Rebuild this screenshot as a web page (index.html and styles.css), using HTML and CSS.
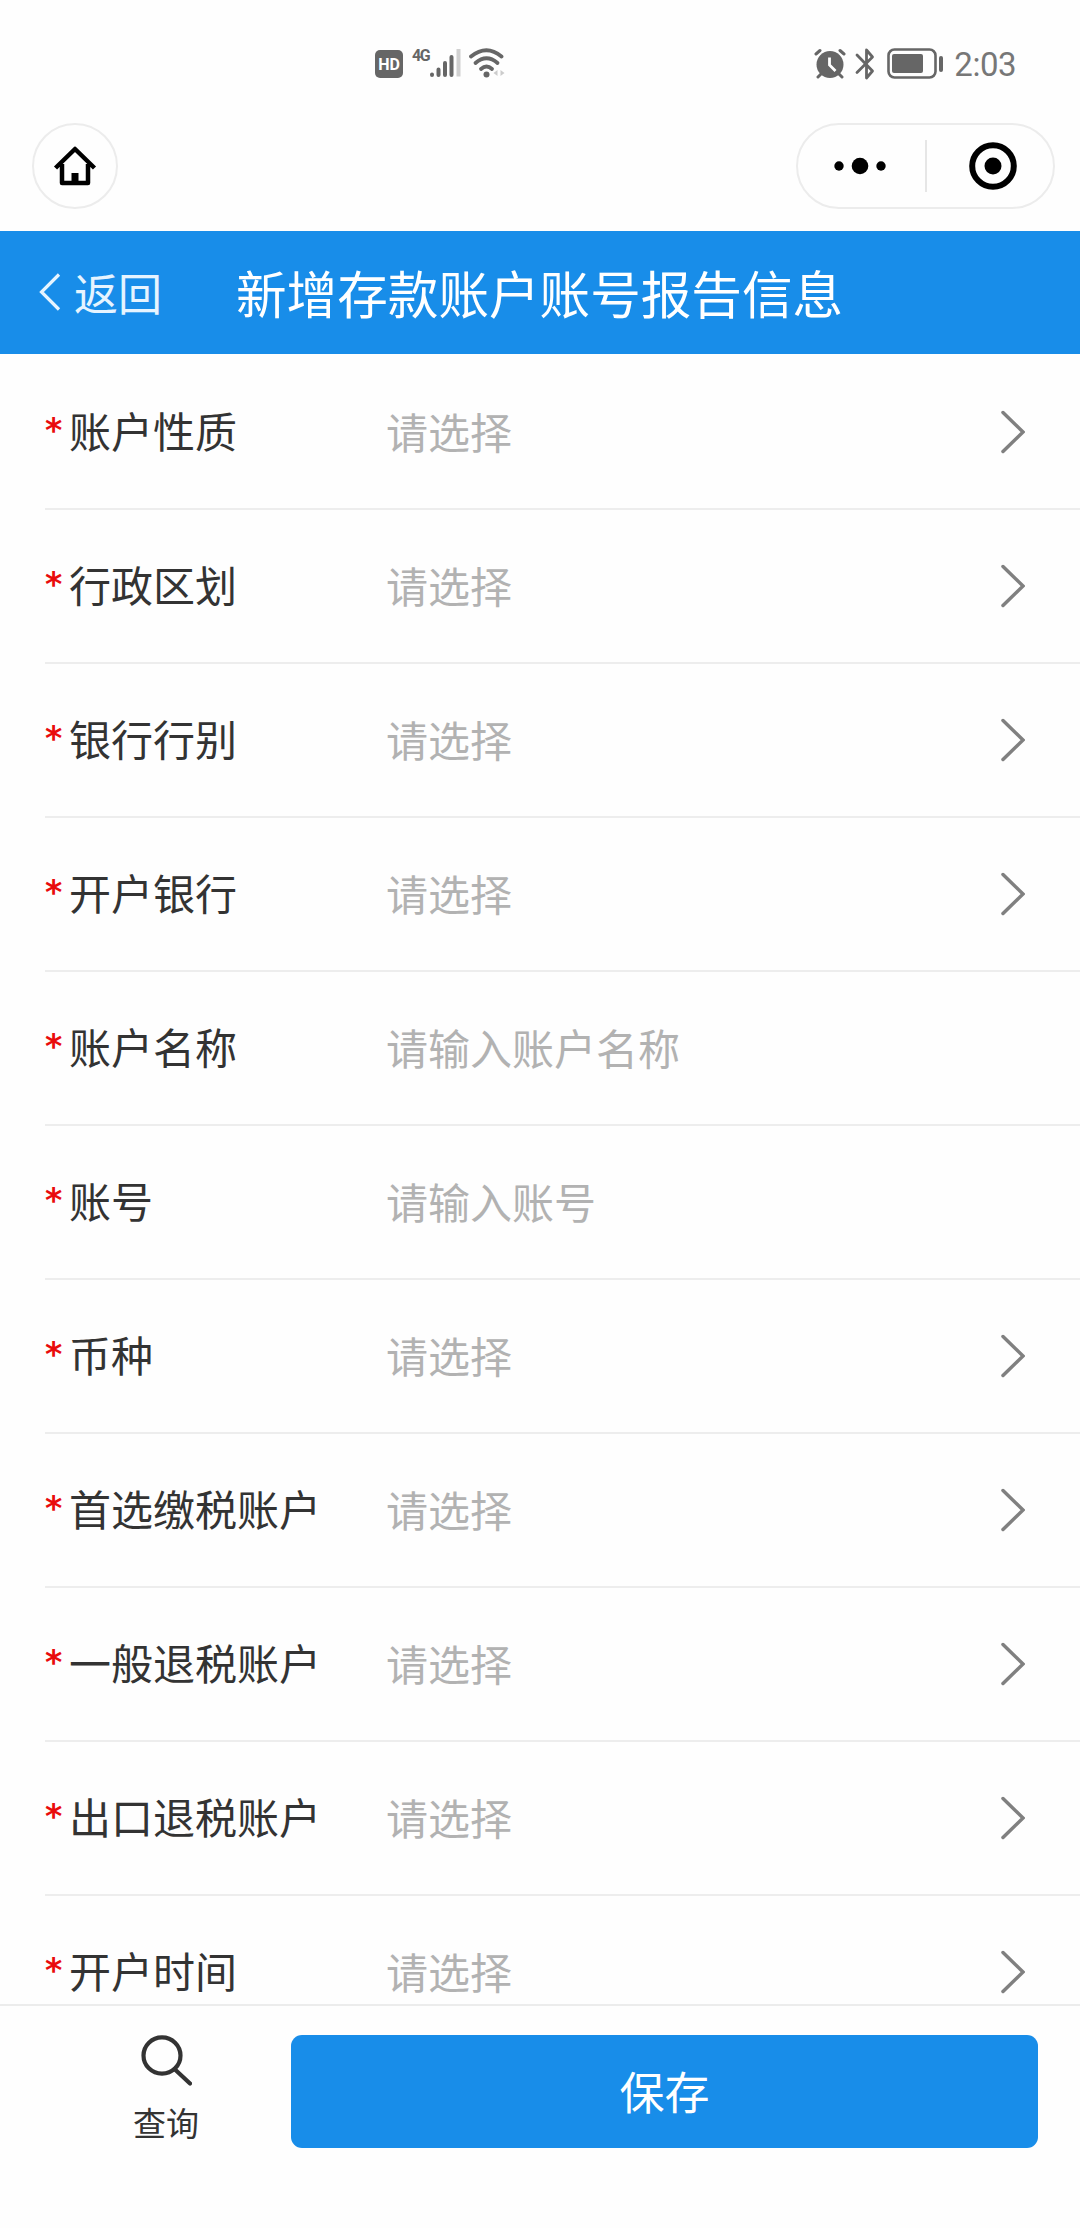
FILE: index.html
```
<!doctype html>
<html lang="zh-CN">
  <head>
    <meta charset="UTF-8" />
    <title>新增存款账户账号报告信息</title>
    <link rel="stylesheet" href="styles.css">
  </head>
  <body>
    <div class="status-bar">
      <div class="status-left">
        <span class="hd">HD</span>
        <span class="network">4G</span>
        <svg class="signal" width="32" height="30" viewBox="0 0 32 30">
          <g fill="none" stroke="#666" stroke-width="4" stroke-linecap="round">
            <path d="M3 26.5V27M9.5 21.500V27M16 15V27M22.500 9V27" />
            <path d="M29.500 1V28.500" stroke="#d0d0d0" stroke-linecap="butt" />
          </g>
        </svg>
        <svg class="wifi" width="36" height="30" viewBox="0 0 36 30">
          <g fill="none" stroke="#666" stroke-width="3.800" stroke-linecap="round">
            <path d="M2 8.500Q17.500 -4 32.500 8.500" />
            <path d="M6.500 15Q17.500 5.500 28.500 15" />
            <path d="M12 21Q17.500 16 23 21" />
          </g>
          <circle cx="17.500" cy="26.500" r="3" fill="#666" />
          <path d="M28.500 22v6l-4-3zM31.500 22v6l4-3z" fill="#ccc" />
        </svg>
      </div>
      <div class="status-right">
        <svg width="32" height="32" viewBox="0 0 32 32">
          <g fill="none" stroke="#666" stroke-width="3" stroke-linecap="round">
            <path d="M2 6L6 2.500M26 2.500L30 6M7 26L4 29M25 26L28 29" />
          </g>
          <circle cx="16" cy="16.500" r="13.500" fill="#666" />
          <path d="M15.500 9.500v7.500l6 6" fill="none" stroke="#fff" stroke-width="2.800" />
        </svg>
        <svg class="bluetooth" width="20" height="34" viewBox="0 0 20 34">
          <path d="M2 8L17.500 24L11.500 31V3L17.500 10L2 25.500" fill="none" stroke="#666" stroke-width="2.800" stroke-linecap="round" stroke-linejoin="round" />
        </svg>
        <svg class="battery" width="58" height="32" viewBox="0 0 58 32">
          <rect x="1.500" y="1.500" width="47" height="28" rx="6" fill="none" stroke="#666" stroke-width="2.600" />
          <rect x="5" y="6" width="31" height="19" rx="2" fill="#666" />
          <rect x="52" y="8" width="4" height="16" rx="2" fill="#666" />
        </svg>
        <span class="clock">2:03</span>
      </div>
    </div>

    <div class="app-bar">
      <div class="home">
        <svg width="44" height="40" viewBox="0 0 44 40">
          <path d="M2.500 22L22 3L41.500 22M9 18V37H35V18" fill="none" stroke="#000" stroke-width="4.500" stroke-linejoin="round" />
          <path d="M18.500 27h7v11h-7z" />
        </svg>
      </div>
      <div class="capsule">
        <svg width="52" height="18" viewBox="0 0 52 18">
          <circle cx="5" cy="9" r="4.700" />
          <circle cx="26" cy="9" r="8.300" />
          <circle cx="47" cy="9" r="4.700" />
        </svg>
        <span class="divider"></span>
        <svg width="48" height="48" viewBox="0 0 48 48">
          <circle cx="24" cy="24" r="20.800" fill="none" stroke="#000" stroke-width="6" />
          <circle cx="24" cy="24" r="8.500" />
        </svg>
      </div>
    </div>

    <div class="header">
      <div class="back">
        <svg width="22" height="38" viewBox="0 0 22 38">
          <path d="M20 1.500L2.500 19L20 36.500" fill="none" stroke="#e6f4ff" stroke-width="3.200" />
        </svg>
        <span>返回</span>
      </div>
      <h1>新增存款账户账号报告信息</h1>
    </div>

    <div class="form">
      <div class="row"><i>*</i><label>账户性质</label><span class="value">请选择</span><svg class="arrow" viewBox="0 0 24 44"><path d="M2 2.500L22 22L2 41.500" /></svg></div>
      <div class="row"><i>*</i><label>行政区划</label><span class="value">请选择</span><svg class="arrow" viewBox="0 0 24 44"><path d="M2 2.500L22 22L2 41.500" /></svg></div>
      <div class="row"><i>*</i><label>银行行别</label><span class="value">请选择</span><svg class="arrow" viewBox="0 0 24 44"><path d="M2 2.500L22 22L2 41.500" /></svg></div>
      <div class="row"><i>*</i><label>开户银行</label><span class="value">请选择</span><svg class="arrow" viewBox="0 0 24 44"><path d="M2 2.500L22 22L2 41.500" /></svg></div>
      <div class="row"><i>*</i><label>账户名称</label><span class="value">请输入账户名称</span></div>
      <div class="row"><i>*</i><label>账号</label><span class="value">请输入账号</span></div>
      <div class="row"><i>*</i><label>币种</label><span class="value">请选择</span><svg class="arrow" viewBox="0 0 24 44"><path d="M2 2.500L22 22L2 41.500" /></svg></div>
      <div class="row"><i>*</i><label>首选缴税账户</label><span class="value">请选择</span><svg class="arrow" viewBox="0 0 24 44"><path d="M2 2.500L22 22L2 41.500" /></svg></div>
      <div class="row"><i>*</i><label>一般退税账户</label><span class="value">请选择</span><svg class="arrow" viewBox="0 0 24 44"><path d="M2 2.500L22 22L2 41.500" /></svg></div>
      <div class="row"><i>*</i><label>出口退税账户</label><span class="value">请选择</span><svg class="arrow" viewBox="0 0 24 44"><path d="M2 2.500L22 22L2 41.500" /></svg></div>
      <div class="row"><i>*</i><label>开户时间</label><span class="value">请选择</span><svg class="arrow" viewBox="0 0 24 44"><path d="M2 2.500L22 22L2 41.500" /></svg></div>
    </div>

    <div class="footer">
      <div class="query">
        <svg width="52" height="54" viewBox="0 0 52 54">
          <g fill="none" stroke="#333" stroke-width="4.200" stroke-linecap="round">
            <ellipse cx="22" cy="20.500" rx="18.500" ry="18.200" />
            <path d="M35 34.500L50 48.500" />
          </g>
        </svg>
        <span>查询</span>
      </div>
      <button class="save">保存</button>
    </div>
  </body>
</html>
```
FILE: styles.css
```
* {
  box-sizing: border-box;
}

body {
  margin: 0;
  width: 1080px;
  height: 2228px;
  display: flex;
  flex-direction: column;
  overflow: hidden;
  background: #fefefe;
  color: #333;
  font-family: "Noto Sans CJK SC", sans-serif;
}

svg {
  display: block;
  flex: none;
}

/* phone status bar */
.status-bar {
  height: 123px;
  padding: 0 64px 0 375px;
  display: flex;
  justify-content: space-between;
  align-items: flex-start;
  color: #666;
}

.status-left {
  display: flex;
  margin-top: 48px;
}

.hd {
  width: 28px;
  height: 28px;
  margin-top: 2px;
  border-radius: 5px;
  background: #666;
  color: #fff;
  font: bold 16px/29px Roboto, sans-serif;
  text-align: center;
}

.network {
  margin-left: 9px;
  width: 17px;
  font: bold 16px/16px Roboto, sans-serif;
  letter-spacing: -1.500px;
}

.wifi {
  margin-left: 8px;
}

.status-right {
  display: flex;
  align-items: center;
  margin-top: 46px;
  height: 36px;
}

.bluetooth {
  margin-left: 9px;
}

.battery {
  margin-left: 12px;
}

.clock {
  margin-left: 9px;
  padding-top: 1px;
  font: 400 33px/36px Roboto, sans-serif;
  letter-spacing: -0.500px;
  color: #777;
}

/* mini program bar */
.app-bar {
  height: 108px;
  padding: 0 25px 0 32px;
  display: flex;
  justify-content: space-between;
}

.home {
  width: 86px;
  height: 86px;
  border: 2px solid #ececec;
  border-radius: 50%;
  display: flex;
  justify-content: center;
  align-items: center;
}

.capsule {
  width: 259px;
  height: 86px;
  border: 2px solid #ececec;
  border-radius: 43px;
  padding: 0 36px;
  display: flex;
  justify-content: space-between;
  align-items: center;
}

.divider {
  width: 2px;
  height: 52px;
  background: #e6e6e6;
  margin-right: 4px;
}

.header {
  height: 123px;
  padding: 0 0 2px 39px;
  display: flex;
  align-items: center;
  background: #188de9;
  color: #fff;
}

.back {
  width: 197px;
  display: flex;
  align-items: center;
  font-size: 44px;
  color: #e6f4ff;
}

.back span {
  margin-left: 13px;
}

h1 {
  margin: 0;
  font-size: 50.600px;
  font-weight: 400;
}

/* form rows */
.form {
  flex: 1;
  min-height: 0;
  overflow: hidden;
  padding: 2px 0 0 45px;
}

.row {
  height: 154.050px;
  padding-right: 55px;
  border-bottom: 2px solid #ededed;
  display: flex;
  align-items: center;
  font-size: 42px;
}

.row i {
  width: 24px;
  padding-bottom: 3px;
  font-family: "DejaVu Sans", sans-serif;
  font-size: 33px;
  font-weight: bold;
  font-style: normal;
  color: #e90c0c;
}

.row label {
  width: 317px;
  padding-bottom: 5px;
}

.value {
  flex: 1;
  padding-bottom: 3px;
  color: #b2b2b2;
}

.arrow {
  width: 24px;
  height: 44px;
  fill: none;
  stroke: #808080;
  stroke-width: 3.500;
  stroke-linecap: round;
}

/* bottom bar */
.footer {
  height: 224px;
  padding: 29px 42px 0 41px;
  border-top: 2px solid #ececec;
  display: flex;
  align-items: flex-start;
}

.query {
  width: 250px;
  display: flex;
  flex-direction: column;
  align-items: center;
  font-size: 33px;
  line-height: 48px;
}

.query span {
  margin-top: 9px;
}

.save {
  flex: 1;
  height: 113px;
  padding: 0 0 3px;
  border: none;
  border-radius: 11px;
  background: #188de9;
  color: #fff;
  font-family: inherit;
  font-size: 45px;
}
```
